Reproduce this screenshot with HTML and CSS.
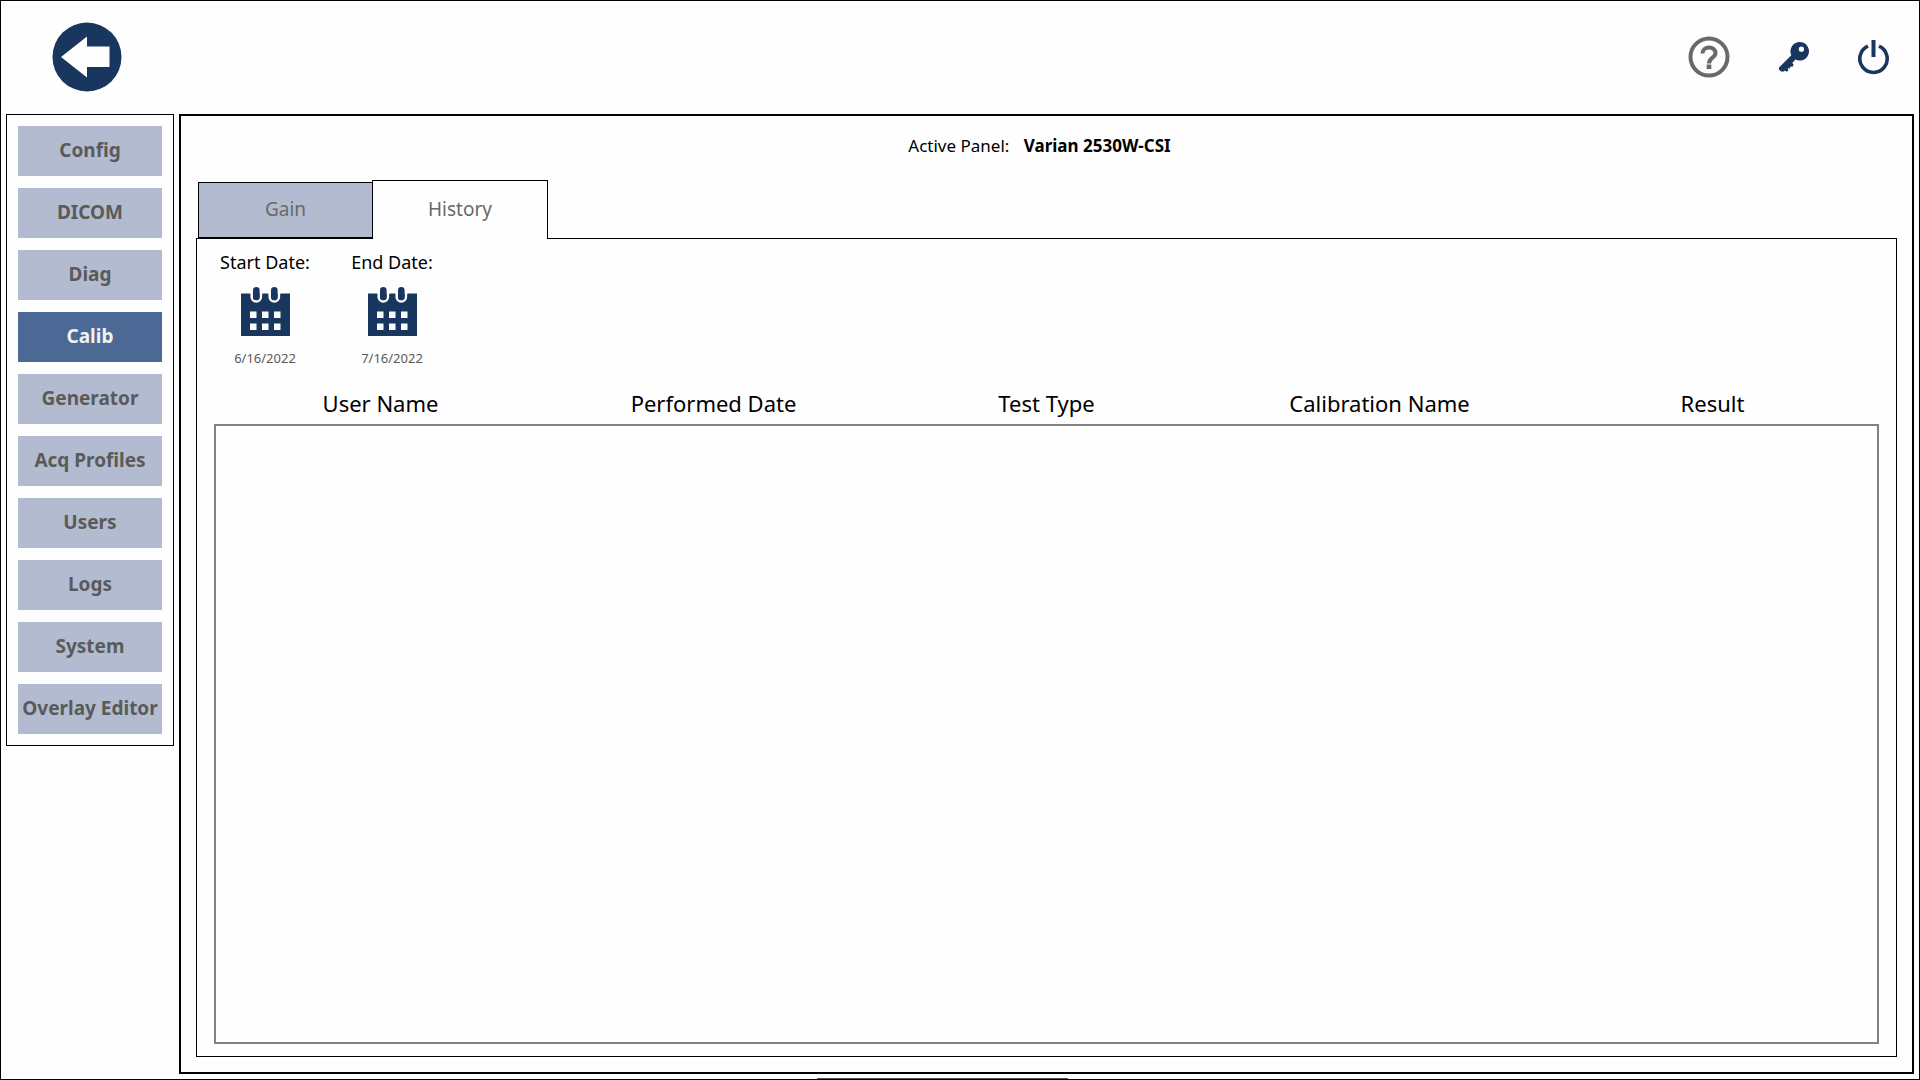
FILE: index.html
```html
<!DOCTYPE html>
<html lang="en">
<head>
  <meta charset="UTF-8">
  <meta name="viewport" content="width=device-width, initial-scale=1.0">
  <title>Calibration History</title>
  <link rel="stylesheet" href="styles.css">
</head>
<body>
  <div class="window">
    <header class="top-bar">
      <button type="button" class="icon-button" aria-label="Back">
        <svg width="70" height="70" viewBox="0 0 70 70">
          <circle cx="35" cy="35" r="34.500" fill="#19365f"/>
          <path d="M9 35 L35 14.500 V24.500 H57.500 V45 H35 V55.500 Z" fill="#fefefe"/>
        </svg>
      </button>
      <div class="top-actions">
        <button type="button" class="icon-button" aria-label="Help">
          <svg width="42" height="42" viewBox="0 0 42 42">
            <circle cx="21" cy="21" r="18.500" fill="none" stroke="#696969" stroke-width="4"/>
            <path d="M14.500 17.500 C14.500 9.500 27.500 9.500 27.500 17 C27.500 22 21 21.500 21 27.500" fill="none" stroke="#696969" stroke-width="4"/>
            <rect x="18.700" y="28.500" width="4.600" height="4.500" fill="#696969"/>
          </svg>
        </button>
        <button type="button" class="icon-button" aria-label="Key">
          <svg width="30" height="30" viewBox="0 0 30 30">
            <path fill="#19365f" fill-rule="evenodd" d="M20.500 0 A9.300 9.300 0 1 1 16.500 17.600 L13.200 21 L14.600 22.600 L13.600 24.800 L11.400 24.600 L11 26.600 L8.800 26 L9.400 28.400 L7.600 29.800 L6 28.600 L4.800 29.400 H2 L0 27.600 V25.600 L12.300 13.200 A9.300 9.300 0 0 1 20.500 0 Z M22.400 4.600 A2.600 2.600 0 1 0 22.400 9.800 A2.600 2.600 0 1 0 22.400 4.600 Z"/>
          </svg>
        </button>
        <button type="button" class="icon-button" aria-label="Power">
          <svg width="32" height="36" viewBox="0 0 32 36">
            <path d="M10 7.200 A13.700 13.700 0 1 0 21 7.200" fill="none" stroke="#19365f" stroke-width="3.600"/>
            <rect x="13.500" y="1" width="4" height="17" fill="#19365f"/>
          </svg>
        </button>
      </div>
    </header>

    <div class="content">
      <nav class="sidebar">
        <button type="button">Config</button>
        <button type="button">DICOM</button>
        <button type="button">Diag</button>
        <button type="button" class="active">Calib</button>
        <button type="button">Generator</button>
        <button type="button">Acq Profiles</button>
        <button type="button">Users</button>
        <button type="button">Logs</button>
        <button type="button">System</button>
        <button type="button">Overlay Editor</button>
      </nav>

      <main class="panel">
        <p class="active-panel">Active Panel: <strong>Varian 2530W-CSI</strong></p>

        <div class="tabs" role="tablist">
          <button type="button" class="tab" role="tab" aria-selected="false">Gain</button>
          <button type="button" class="tab selected" role="tab" aria-selected="true">History</button>
        </div>

        <section class="tab-body">
          <div class="dates">
            <div class="date">
              <label for="startDate">Start Date:</label>
              <button type="button" id="startDate" class="icon-button">
                <svg width="49" height="49" viewBox="0 0 49 49">
                  <rect x="0" y="6.500" width="49" height="42.500" fill="#19365f"/>
                  <g fill="#19365f" stroke="#fefefe" stroke-width="2.500">
                    <rect x="10.700" y="-3" width="9.200" height="17.500" rx="4.600"/>
                    <rect x="28.700" y="-3" width="9.200" height="17.500" rx="4.600"/>
                  </g>
                  <path d="M9 0 H22 V6.500 H9 Z M27 0 H40 V6.500 H27 Z" fill="#fefefe"/>
                  <rect x="12" y="0" width="6.600" height="13" rx="3.300" fill="#19365f"/>
                  <rect x="30" y="0" width="6.600" height="13" rx="3.300" fill="#19365f"/>
                  <path d="M9 24.500h6.500v6.500h-6.500z M21 24.500h6.500v6.500h-6.500z M33 24.500h6.500v6.500h-6.500z M9 36.500h6.500v6.500h-6.500z M21 36.500h6.500v6.500h-6.500z M33 36.500h6.500v6.500h-6.500z" fill="#fefefe"/>
                </svg>
              </button>
              <span class="date-value">6/16/2022</span>
            </div>
            <div class="date">
              <label for="endDate">End Date:</label>
              <button type="button" id="endDate" class="icon-button">
                <svg width="49" height="49" viewBox="0 0 49 49">
                  <rect x="0" y="6.500" width="49" height="42.500" fill="#19365f"/>
                  <g fill="#19365f" stroke="#fefefe" stroke-width="2.500">
                    <rect x="10.700" y="-3" width="9.200" height="17.500" rx="4.600"/>
                    <rect x="28.700" y="-3" width="9.200" height="17.500" rx="4.600"/>
                  </g>
                  <path d="M9 0 H22 V6.500 H9 Z M27 0 H40 V6.500 H27 Z" fill="#fefefe"/>
                  <rect x="12" y="0" width="6.600" height="13" rx="3.300" fill="#19365f"/>
                  <rect x="30" y="0" width="6.600" height="13" rx="3.300" fill="#19365f"/>
                  <path d="M9 24.500h6.500v6.500h-6.500z M21 24.500h6.500v6.500h-6.500z M33 24.500h6.500v6.500h-6.500z M9 36.500h6.500v6.500h-6.500z M21 36.500h6.500v6.500h-6.500z M33 36.500h6.500v6.500h-6.500z" fill="#fefefe"/>
                </svg>
              </button>
              <span class="date-value">7/16/2022</span>
            </div>
          </div>

          <div class="history">
            <table>
              <thead>
                <tr>
                  <th>User Name</th>
                  <th>Performed Date</th>
                  <th>Test Type</th>
                  <th>Calibration Name</th>
                  <th>Result</th>
                </tr>
              </thead>
              <tbody>
                <tr>
                  <td colspan="5"></td>
                </tr>
              </tbody>
            </table>
          </div>
        </section>
      </main>
    </div>

    <div class="bottom-handle"></div>
  </div>
</body>
</html>
```
FILE: styles.css
```css
* {
  box-sizing: border-box;
}
body {
  margin: 0;
  font-family: "Noto Sans", "Open Sans", sans-serif;
  font-size: 18px;
  color: #000;
  background-color: #fefefe;
}
button {
  font-family: inherit;
  cursor: pointer;
}
.window {
  position: relative;
  display: flex;
  flex-direction: column;
  min-height: 100vh;
  border: 1px solid #000;
  overflow: hidden;
}
.top-bar {
  display: flex;
  justify-content: space-between;
  align-items: center;
  height: 113px;
  padding: 0 29px 2px 51px;
}
.top-actions {
  display: flex;
  align-items: center;
  gap: 49px;
}
.icon-button {
  padding: 0;
  border: none;
  background: none;
}
.icon-button svg {
  display: block;
}
.content {
  flex: 1;
  display: flex;
  align-items: flex-start;
  gap: 5px;
  padding: 0 5px 5px;
}
.sidebar {
  display: flex;
  flex-direction: column;
  gap: 12px;
  width: 168px;
  padding: 11px;
  border: 1px solid #000;
}
.sidebar button {
  height: 50px;
  padding: 0 0 2px;
  border: none;
  background-color: #b2bbcf;
  color: #5a5a5a;
  font-size: 19px;
  font-weight: bold;
  white-space: nowrap;
}
.sidebar button.active {
  background-color: #4c6995;
  color: #f0f0f0;
}
.panel {
  flex: 1;
  align-self: stretch;
  display: flex;
  flex-direction: column;
  padding: 15px;
  border: 2px solid #000;
}
.active-panel {
  margin: 0 0 20px;
  padding-right: 14px;
  font-size: 17px;
  line-height: 29px;
  text-align: center;
}
.active-panel strong {
  margin-left: 10px;
}
.tabs {
  display: flex;
  align-items: flex-end;
  padding-left: 2px;
  margin-bottom: -1px;
}
.tab {
  width: 174px;
  height: 57px;
  padding: 0 0 2px;
  border: 1px solid #000;
  border-right: none;
  border-bottom-width: 2px;
  background-color: #b2bbcf;
  color: #696969;
  font-size: 19px;
}
.tab.selected {
  z-index: 1;
  width: 176px;
  height: 59px;
  border-right: 1px solid #000;
  border-bottom: none;
  background-color: #fefefe;
}
.tab-body {
  flex: 1;
  display: flex;
  flex-direction: column;
  padding: 10px 17px 12px;
  border: 1px solid #000;
}
.dates {
  display: flex;
  gap: 25px;
}
.date {
  display: flex;
  flex-direction: column;
  align-items: center;
  width: 102px;
}
.date label {
  margin-bottom: 12px;
  line-height: 26px;
}
.date-value {
  margin-top: 12px;
  color: #5a5a5a;
  font-size: 13px;
  line-height: 20px;
}
.history {
  flex: 1;
  display: flex;
  margin-top: 18px;
}
table {
  width: 100%;
  table-layout: fixed;
  border-spacing: 0;
}
th {
  height: 38px;
  padding: 0 0 5px;
  font-size: 22px;
  font-weight: normal;
  line-height: 30px;
}
td {
  height: 100%;
  padding: 0;
  border: 2px solid #828282;
}
/* top edge of the bar docked under the window */
.bottom-handle {
  position: absolute;
  bottom: -1px;
  left: 50%;
  width: 251px;
  height: 2px;
  margin-left: -143px;
  border-top: 1px solid #555;
  background-color: #19365f;
}
```
